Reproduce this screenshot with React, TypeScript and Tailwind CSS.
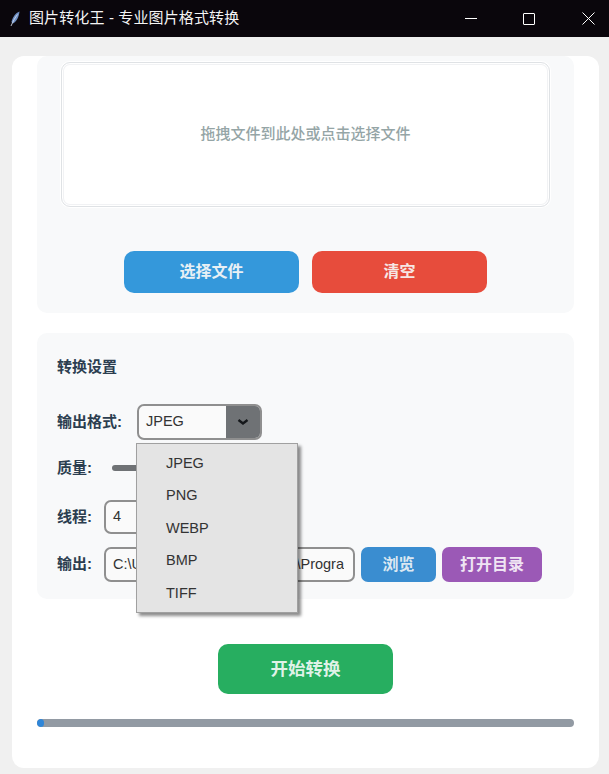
const cjk = "font-['Liberation_Sans','Noto_Sans_CJK_SC',sans-serif]";

function Feather() {
  return (
    <svg width="11" height="16" viewBox="0 0 11 16" className="block">
      <path d="M9.5 0.5C5.5 2 2.5 6 1.5 11L2.5 12.5C6 11.5 9 6 9.5 0.5Z" fill="#6f8fc4" />
      <path d="M7.5 3.5C5 6.5 3 10.5 1 15" stroke="#dfe7f5" strokeWidth="0.8" fill="none" />
    </svg>
  );
}

const inputBox = "border-2 border-[#8f8f8f] rounded-[7px] bg-[#fafafa] text-[14.5px] text-[#333333] flex items-center";
const label = "text-[15px] font-bold text-[#2c3e50]";

export default function App() {
  return (
    <div className={`w-[609px] h-[774px] overflow-hidden bg-[#f0f0f0] ${cjk}`}>
      <header className="h-[37px] bg-[#0a060c] flex items-center text-white">
        <div className="w-[29px] flex justify-center pl-[1px] shrink-0"><Feather /></div>
        <span className="text-[15px] tracking-[0.12px] text-[#f4f4f4]">图片转化王 - 专业图片格式转换</span>
        <div className="ml-auto pr-[14px] flex items-center">
          <div className="w-[12px] h-[1px] bg-white" />
          <div className="ml-[46px] w-[12px] h-[12px] border border-white rounded-[1px]" />
          <svg width="13" height="13" viewBox="0 0 13 13" className="block ml-[47px]">
            <path d="M0.5 0.5L12.5 12.5M12.5 0.5L0.5 12.5" stroke="white" strokeWidth="1" />
          </svg>
        </div>
      </header>

      <main className="relative mt-[19px] ml-[12px] w-[587px] h-[712px] bg-white rounded-[12px] px-[25px] pb-[41px] flex flex-col">
        <section className="h-[257px] shrink-0 bg-[#f8f9fa] rounded-[10px] pt-[6px] pb-[20px] px-[24px] flex flex-col">
          <div className="h-[145px] w-[489px] border border-[#dfe2e5] rounded-[9px] bg-white shadow-[inset_0_0_0_1px_#ffffff,inset_0_0_0_2px_#f1f2f4,0_0_0_1px_#ffffff] flex items-center justify-center">
            <span className="text-[15px] font-medium text-[#95a5a6]">拖拽文件到此处或点击选择文件</span>
          </div>
          <div className="mt-[44px] flex justify-center gap-[13px]">
            <button className="w-[175px] h-[42px] rounded-[10px] bg-[#3498db] text-[16px] font-bold text-[#e8f0f5]">选择文件</button>
            <button className="w-[175px] h-[42px] rounded-[10px] bg-[#e74c3c] text-[16px] font-bold text-[#f6e6e4]">清空</button>
          </div>
        </section>

        <section className="mt-[20px] h-[266px] shrink-0 bg-[#f8f9fa] rounded-[10px] pt-[24px] pl-[20px] pr-[32px] flex flex-col">
          <h2 className={`${label} leading-[20px]`}>转换设置</h2>
          <div className="mt-[27px] flex items-center h-[36px]">
            <span className={`${label} w-[80px] shrink-0`}>输出格式:</span>
            <div className={`${inputBox} w-[125px] h-[36px] overflow-hidden pl-[7px]`}>
              <span>JPEG</span>
              <div className="ml-auto w-[34px] h-full bg-[#6f7275] flex items-center justify-center">
                <svg width="14" height="8" viewBox="0 0 14 8" className="block">
                  <path d="M2.5 2L7 5.5L11.5 2" stroke="#14171a" strokeWidth="2.4" fill="none" />
                </svg>
              </div>
            </div>
          </div>
          <div className="mt-[10px] flex items-center h-[36px]">
            <span className={`${label} w-[55px] shrink-0`}>质量:</span>
            <div className="w-[120px] h-[6px] rounded-full bg-[#6f7275]" />
          </div>
          <div className="mt-[14px] flex items-center h-[34px]">
            <span className={`${label} w-[47px] shrink-0`}>线程:</span>
            <div className={`${inputBox} w-[100px] h-[34px] pl-[7px]`}>4</div>
          </div>
          <div className="mt-[13px] flex items-center h-[35px]">
            <span className={`${label} w-[47px] shrink-0`}>输出:</span>
            <div className={`${inputBox} w-[251px] h-[35px] pl-[7px] pr-[9px]`}>
              <span className="block overflow-hidden whitespace-nowrap">C:\Users\Administrator\Work\Program Files</span>
            </div>
            <button className="ml-[6px] w-[75px] h-[35px] rounded-[7px] bg-[#3a8dd0] text-[16px] font-bold text-[#dce8f2]">浏览</button>
            <button className="ml-[6px] w-[100px] h-[35px] rounded-[7px] bg-[#9b59b6] text-[16px] font-bold text-[#efe4f3]">打开目录</button>
          </div>
        </section>

        <div className="mt-[45px] flex justify-center">
          <button className="w-[175px] h-[50px] rounded-[10px] bg-[#27ae60] text-[17.5px] font-bold text-[#dff2e7]">开始转换</button>
        </div>

        <div className="mt-[25px] h-[8px] rounded-full bg-[#929aa3] overflow-hidden">
          <div className="w-[7px] h-full rounded-full bg-[#2f86d8]" />
        </div>

        <ul className="absolute left-[124px] top-[387px] w-[162px] h-[170px] bg-[#e4e4e4] border border-[#a0a0a0] shadow-[3px_3px_3px_rgba(0,0,0,0.45)] pt-[3px] text-[14.5px] text-[#333333]">
          {["JPEG", "PNG", "WEBP", "BMP", "TIFF"].map((item) => (
            <li key={item} className="h-[32.4px] leading-[32px] pl-[29px]">{item}</li>
          ))}
        </ul>
      </main>
    </div>
  );
}
